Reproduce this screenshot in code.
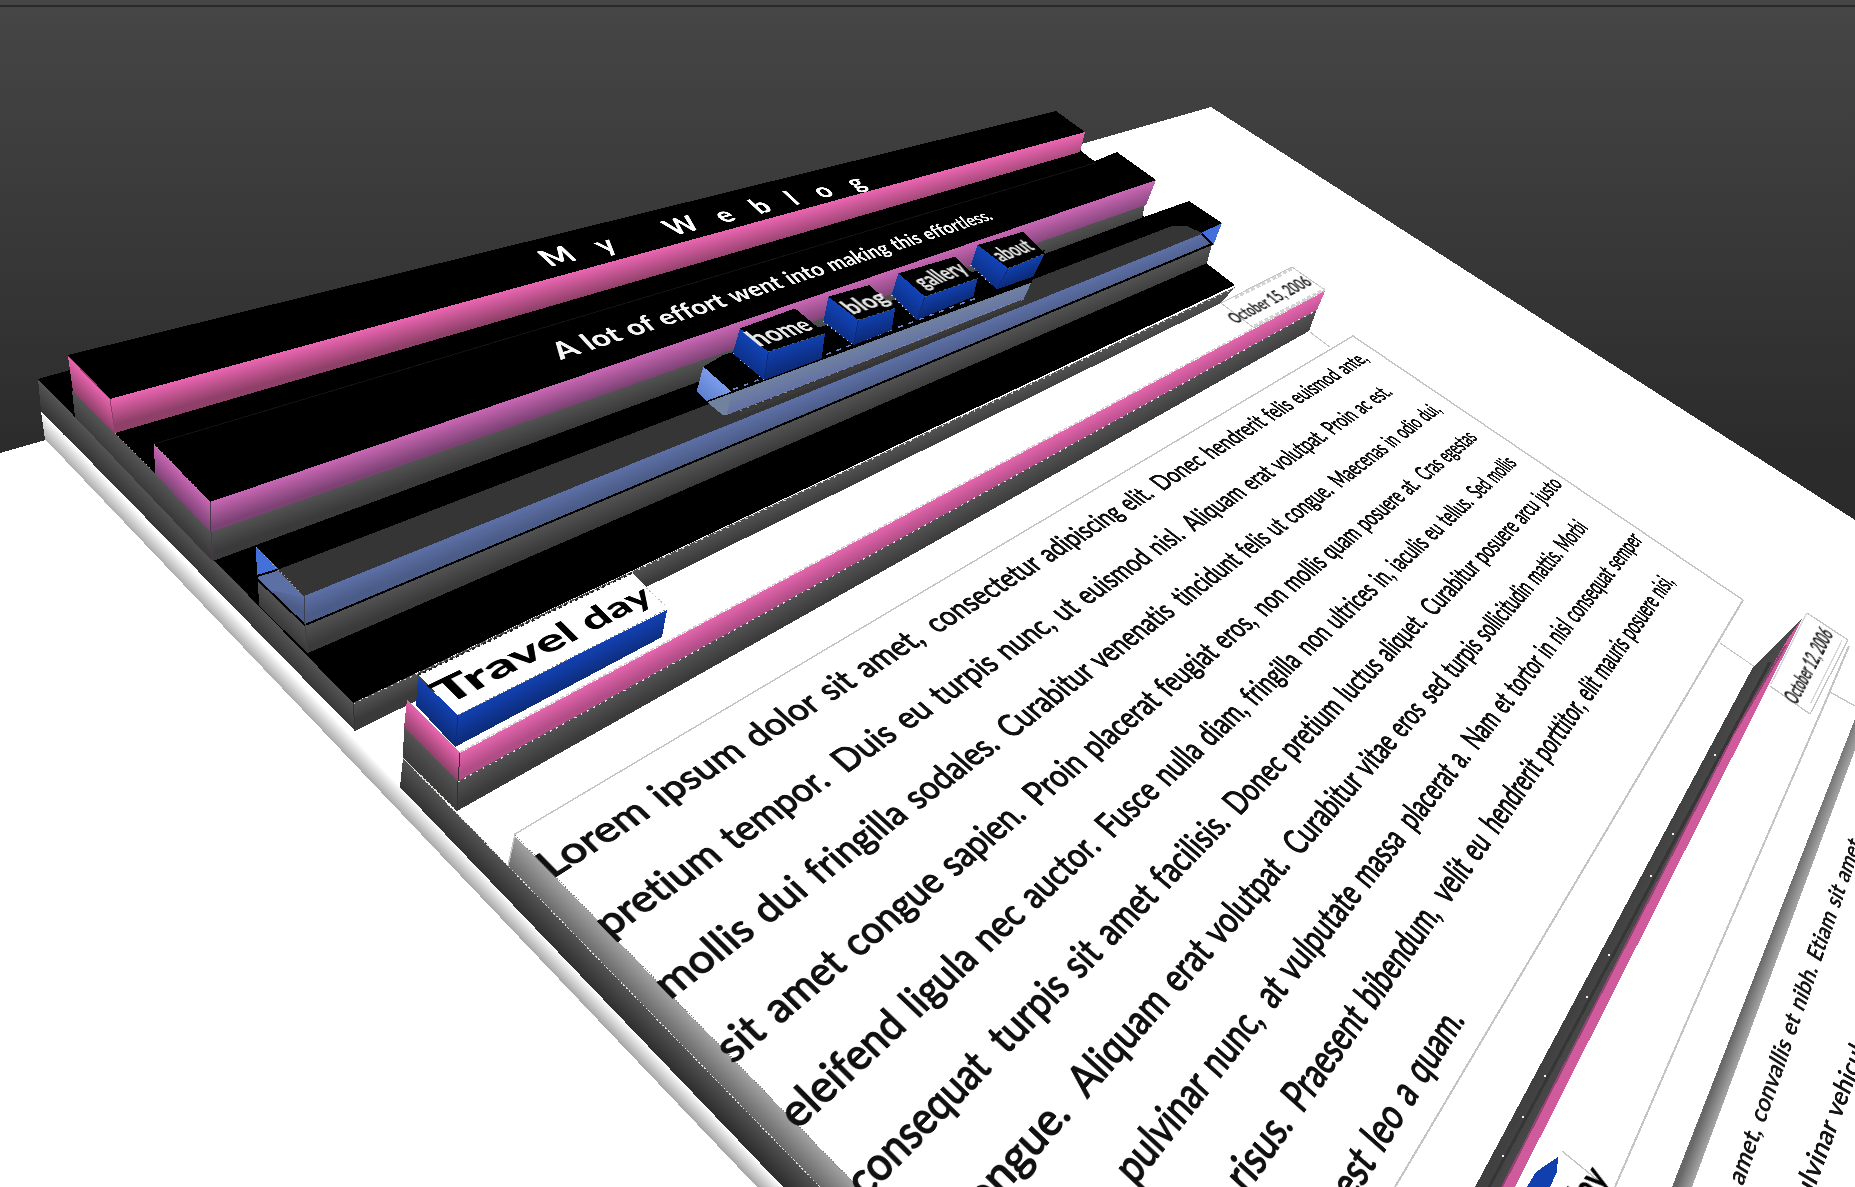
import React from "react";

/* ---------- projective geometry ---------- */

// 3x3 matrix taking the unit square onto a quad (tl, tr, br, bl)
function squareToQuad([p0, p1, p2, p3]) {
  const dx1 = p1[0] - p2[0], dx2 = p3[0] - p2[0];
  const dy1 = p1[1] - p2[1], dy2 = p3[1] - p2[1];
  const sx = p0[0] - p1[0] + p2[0] - p3[0];
  const sy = p0[1] - p1[1] + p2[1] - p3[1];
  const d = dx1 * dy2 - dx2 * dy1;
  const g = (sx * dy2 - dx2 * sy) / d;
  const h = (dx1 * sy - sx * dy1) / d;
  return [
    p1[0] - p0[0] + g * p1[0], p3[0] - p0[0] + h * p3[0], p0[0],
    p1[1] - p0[1] + g * p1[1], p3[1] - p0[1] + h * p3[1], p0[1],
    g, h, 1,
  ];
}

function invert([a, b, c, d, e, f, g, h, i]) {
  return [
    e * i - f * h, c * h - b * i, b * f - c * e,
    f * g - d * i, a * i - c * g, c * d - a * f,
    d * h - e * g, b * g - a * h, a * e - b * d,
  ];
}

function apply(m, [x, y]) {
  const w = m[6] * x + m[7] * y + m[8];
  return [(m[0] * x + m[1] * y + m[2]) / w, (m[3] * x + m[4] * y + m[5]) / w];
}

function toCss(m, w, h) {
  const v = [
    m[0] / w, m[3] / w, 0, m[6] / w,
    m[1] / h, m[4] / h, 0, m[7] / h,
    0, 0, 1, 0,
    m[2], m[5], 0, 1,
  ];
  return `matrix3d(${v.map((n) => n.toFixed(10)).join(",")})`;
}

/* ---------- text laid on a tilted plane ---------- */

function TiltedText({ a, b, ua, ub = ua, w, h, size, children, spread = false, className }) {
  const quad = [
    [a[0] + ua[0], a[1] + ua[1]],
    [b[0] + ub[0], b[1] + ub[1]],
    b,
    a,
  ];
  return (
    <svg
      width={w}
      height={h}
      className={`absolute left-0 top-0 origin-top-left overflow-visible [font-variant-ligatures:none] ${className}`}
      style={{ transform: toCss(squareToQuad(quad), w, h) }}
    >
      <text
        x="0"
        y={h}
        fontSize={size || h / 0.72}
        textLength={w}
        lengthAdjust={spread ? "spacing" : "spacingAndGlyphs"}
        fill="currentColor"
      >
        {children}
      </text>
    </svg>
  );
}

/* ---------- first article body ---------- */

const BODY = squareToQuad([[515, 834], [1353, 336], [1743, 600], [1192, 1527]]);
const BODY_INV = invert(BODY);
const BW = 2400;
const BH = 1400;

const V1 = apply(BODY_INV, [552, 879])[1];
const V10 = apply(BODY_INV, [1464, 1023])[1];
const STEP = (V10 - V1) / 9;

// each entry: text and the point where its baseline starts; the last point closes the line
const LINES = [
  [["Lorem ipsum dolor sit amet,", null], ["consectetur adipiscing elit.", [931, 628]], ["Donec hendrerit felis euismod ante,", [1157, 487]], [1365, 357]],
  [["pretium tempor.", null], ["Duis eu turpis nunc, ut euismod nisl.", [841, 769]], ["Aliquam erat volutpat. Proin ac est.", [1188, 527]], [1390, 391]],
  [["mollis dui fringilla sodales.", null], ["Curabitur venenatis", [1004, 733]], ["tincidunt felis ut congue.", [1178, 602]], ["Maecenas in odio dui,", [1332, 482]], [1441, 410]],
  [["sit amet congue sapien.", null], ["Proin placerat feugiat eros,", [1033, 802]], ["non mollis quam posuere at.", [1257, 611]], ["Cras egestas", [1419, 476]], [1476, 437]],
  [["eleifend ligula nec auctor.", null], ["Fusce nulla diam, fringilla", [1105, 833]], ["non ultrices in, iaculis eu tellus.", [1302, 651]], ["Sed mollis", [1474, 496]], [1516, 463]],
  [["consequat", null], ["turpis sit amet facilisis.", [1001, 1050]], ["Donec pretium luctus aliquet.", [1233, 811]], ["Curabitur posuere arcu justo", [1430, 614]], [1562, 484]],
  [["congue.", [955, 1222]], ["Aliquam erat volutpat.", [1086, 1098]], ["Curabitur vitae eros", [1296, 854]], ["sed turpis sollicitudin mattis. Morbi", [1431, 703]], [1587, 527]],
  [["pulvinar nunc,", [1132, 1184]], ["at vulputate massa", [1271, 1008]], ["placerat a.", [1414, 832]], ["Nam et tortor in nisl consequat semper", [1473, 748]], [1640, 538]],
  [["risus.", [1241, 1190]], ["Praesent bibendum,", [1304, 1116]], ["velit eu", [1447, 904]], ["hendrerit porttitor, elit mauris posuere nisi,", [1498, 836]], [1676, 583]],
  [["est leo a quam.", [1345, 1197]], [1468, 1023]],
];

function layoutLines() {
  const out = [];
  LINES.forEach((line, i) => {
    const y = (V1 + STEP * i) * BH;
    const us = line.map((seg, k) => {
      const pt = k === line.length - 1 ? seg : seg[1];
      return pt ? apply(BODY_INV, pt)[0] * BW : -6;
    });
    for (let k = 0; k < line.length - 1; k++) {
      const text = line[k][0];
      const span = us[k + 1] - us[k];
      const last = k === line.length - 2;
      const n = text.length;
      out.push({ text, x: us[k], y, w: last ? span : (span * n) / (n + 1.1) });
    }
  });
  return out;
}

function ArticleBody() {
  return (
    <svg
      width={BW}
      height={BH}
      className="absolute left-0 top-0 origin-top-left overflow-visible text-[#111] [font-variant-ligatures:none] [word-spacing:0.38em]"
      style={{ transform: toCss(BODY, BW, BH) }}
    >
      {layoutLines().map((s, i) => (
        <text
          key={i}
          x={s.x}
          y={s.y}
          fontSize={STEP * BH * 0.505}
          textLength={s.w}
          lengthAdjust="spacingAndGlyphs"
          fill="currentColor"
          stroke="currentColor"
          strokeWidth="2.2"
        >
          {s.text}
        </text>
      ))}
    </svg>
  );
}

/* ---------- solid faces ---------- */

const str = (pts) => pts.map((p) => p.join(",")).join(" ");

let faceId = 0;
// p[0]-p[1] is the upper edge, p[3]-p[2] the lower one; the shade runs between them
function face(p, from, to) {
  return { id: `f${faceId++}`, p, from, to };
}

function Face({ f }) {
  const [a, b, c, d] = f.p;
  const ex = b[0] - a[0], ey = b[1] - a[1];
  const len = Math.hypot(ex, ey);
  const nx = -ey / len, ny = ex / len;
  const mx = (a[0] + b[0]) / 2, my = (a[1] + b[1]) / 2;
  const qx = (c[0] + d[0]) / 2, qy = (c[1] + d[1]) / 2;
  const t = (qx - mx) * nx + (qy - my) * ny;
  return (
    <>
      <linearGradient id={f.id} gradientUnits="userSpaceOnUse" x1={mx} y1={my} x2={mx + nx * t} y2={my + ny * t}>
        <stop offset="0" stopColor={f.from} />
        <stop offset="1" stopColor={f.to} />
      </linearGradient>
      <polygon points={str(f.p)} fill={`url(#${f.id})`} />
    </>
  );
}

const DK = ["#535353", "#3a3a3a"];
const PINK = ["#ec66b2", "#8f4069"];
const ORCHID = ["#ca67b5", "#7c4274"];
const SLATE = ["#5d70a6", "#4c5c88"];
const BLUE = ["#1341b2", "#0d2d7c"];

const wrapperFaces = [
  face([[41, 411], [783, 1187], [757, 1187], [45, 439]], "#ffffff", "#a9a9a9"),
  face([[403, 758], [822, 1187], [783, 1187], [400, 787]], "#545454", "#2f2f2f"),
  face([[515, 836], [858, 1187], [820, 1187], [508, 866]], "#a2a2a2", "#6a6a6a"),
];

const headerFaces = [
  face([[38, 379], [353, 703], [355, 731], [41, 411]], "#555555", "#363636"),
  face([[353, 703], [1235, 287], [1221, 303], [355, 731]], ...DK),
];

const bar1Faces = [
  face([[72, 391], [213, 532], [213, 562], [75, 417]], "#555555", "#3a3a3a"),
  face([[68, 356], [110, 399], [115, 433], [73, 392]], ...PINK),
  face([[110, 399], [1085, 132], [1080, 152], [115, 433]], ...PINK),
];

const bar2Faces = [
  face([[211, 532], [1145, 204], [1142, 218], [213, 561]], ...DK),
  face([[154, 444], [210, 502], [211, 533], [155, 474]], ...ORCHID),
  face([[210, 502], [1156, 180], [1146, 205], [211, 532]], ...ORCHID),
];

const bar3Faces = [
  face([[258, 581], [305, 626], [308, 653], [259, 606]], ...DK),
  face([[305, 625], [1212, 244], [1207, 263], [308, 653]], ...DK),
  face([[257, 575], [304, 596], [305, 624], [258, 579]], ...SLATE),
  face([[304, 596], [1204, 233], [1212, 243], [305, 624]], ...SLATE),
];

const postFaces = [
  face([[404, 727], [458, 781], [457, 811], [403, 758]], ...DK),
  face([[458, 781], [1317, 309], [1309, 331], [457, 811]], ...DK),
  face([[407, 699], [460, 753], [458, 781], [404, 728]], ...PINK),
  face([[460, 753], [1325, 291], [1317, 310], [458, 781]], "#e466ad", "#b04c86"),
];

const titleFaces = [
  face([[418, 677], [458, 715], [455, 747], [416, 705]], ...BLUE),
  face([[458, 715], [667, 610], [662, 637], [455, 747]], ...BLUE),
];

const z5 = (pts) => pts.map(([x, y]) => [680 + x / 3, 200 + y / 3]);

const BUTTONS = [
  [[180, 385], [345, 325], [435, 400], [265, 455], [158, 460], [252, 540], [425, 475]],
  [[445, 290], [568, 255], [645, 325], [535, 360], [430, 365], [520, 435], [635, 390]],
  [[655, 220], [825, 170], [893, 235], [735, 290], [635, 285], [710, 360], [880, 290]],
  [[893, 135], [1030, 95], [1095, 160], [985, 205], [872, 195], [950, 268], [1060, 230]],
].map((b) => {
  const [tl, tr, r, f, ll, bt, lr] = z5(b);
  return {
    top: [tl, tr, r, f],
    left: face([tl, f, bt, ll], "#1244b8", "#0d3088"),
    front: face([f, r, lr, bt], "#1140ae", "#0c2a78"),
  };
});

const menuSide = face(z5([[70, 500], [155, 575], [80, 605], [50, 575]]), "#7b9bec", "#5f80cc");
const menuFront = face(z5([[155, 578], [1055, 245], [1030, 300], [140, 645]]), "#71829f", "#6473a4");

const farFaces = [
  face([[1803, 617], [1515, 1187], [1475, 1187], [1753, 667]], "#4d4d4d", "#404040"),
  face([[1855, 750], [1692, 1187], [1672, 1187], [1855, 719]], "#a6a6a6", "#686868"),
];

const DOTS = [[825, 452], [698, 657], [632, 764], [507, 968], [440, 1076], [315, 1282], [248, 1388], [188, 1487]];

function Scene() {
  return (
    <svg width="1855" height="1187" viewBox="0 0 1855 1187" shapeRendering="crispEdges" className="absolute left-0 top-0 block">
      <polygon points="0,453 1211,107 1855,520 1855,1187 0,1187" fill="#fff" />

      {wrapperFaces.map((f) => <Face key={f.id} f={f} />)}
      <path d="M403 758 L820 1187" stroke="#e8e2da" strokeDasharray="2 2" fill="none" />
      <path d="M515 835 L858 1187" stroke="#7a7a7a" strokeDasharray="1 2" fill="none" />

      <polygon points="38,379 70,370 1080,150 1095,162 1144,217 1206,263 1235,285 353,703" fill="#000" />
      {headerFaces.map((f) => <Face key={f.id} f={f} />)}

      {bar1Faces.map((f) => <Face key={f.id} f={f} />)}
      <polygon points="115,433 1080,152 1095,161 154,472" fill="#000" />
      <polygon points="68,355 1056,111 1085,132 110,399" fill="#000" />
      <path d="M115 433 L154 472" stroke="#aaa" strokeDasharray="1 3" fill="none" />
      <path d="M68 356 L110 399 L115 432" stroke="#8f4069" strokeWidth="1" fill="none" />

      <polygon points="154,444 1095,161 1117,152 1156,180 210,502" fill="#000" />
      <path d="M154 444 L1095 163" stroke="#121212" strokeWidth="1" fill="none" />
      {bar2Faces.map((f) => <Face key={f.id} f={f} />)}
      <path d="M154 444 L210 502" stroke="#999" strokeDasharray="1 3" fill="none" />
      <path d="M210 502 L211 532 L213 561" stroke="#4a3a48" fill="none" />

      <polygon points="256,547 1144,217 1189,201 1222,223 1204,236 304,596" fill="#000" />
      <polygon points="277,570 1172,226 1187,226 1204,234 304,596" fill="#353535" />
      <polygon points="256,547 278,569 257,576" fill="#4370da" />
      {bar3Faces.map((f) => <Face key={f.id} f={f} />)}
      <polygon points="257,576 277,569 304,597 270,590" fill="#5d70a6" />
      <path d="M257 576 L277 570" stroke="#000" strokeWidth="2" fill="none" />
      <path d="M258 580 L305 625 L1212 244" stroke="#000" strokeWidth="2" fill="none" />
      <path d="M256 547 L304 596" stroke="#aaa" strokeDasharray="1 3" fill="none" />
      <path d="M304 596 L305 624 L308 653" stroke="#3c3f4c" fill="none" />
      <polygon points="1222,223 1213,246 1201,233" fill="#4370da" />
      <path d="M1202 234 L1213 245" stroke="#000" strokeWidth="2" fill="none" />

      <polygon points={str(z5([[70, 500], [130, 465], [430, 378], [640, 300], [880, 215], [1095, 150], [1055, 245], [155, 578]]))} fill="#000" />
      <Face f={menuSide} />
      <Face f={menuFront} />
      <polygon points={str(z5([[80, 605], [155, 578], [140, 645], [128, 645]]))} fill="#71829f" />
      <path d={`M${z5([[80, 605]])[0]} L${z5([[1055, 245]])[0]}`} stroke="#000" strokeWidth="1.5" fill="none" />
      <path d={`M${z5([[160, 568]])[0]} L${z5([[900, 290]])[0]}`} stroke="#6a84c0" strokeWidth="1.5" strokeDasharray="5 6" fill="none" />
      <path d={`M${z5([[180, 640]])[0]} L${z5([[1025, 305]])[0]}`} stroke="#3a3a3a" strokeWidth="3.5" fill="none" />
      <path d={`M${z5([[180, 632]])[0]} L${z5([[1025, 297]])[0]}`} stroke="#8c8c88" strokeWidth="1" strokeDasharray="2 6" fill="none" />
      {BUTTONS.map((b) => (
        <g key={b.left.id}>
          <polygon points={str(b.top)} fill="#000" />
          <Face f={b.left} />
          <Face f={b.front} />
          <path d={`M${b.top[3]} L${b.left.p[2]}`} stroke="#0c2b7a" fill="none" />
          <path d={`M${b.top[3]} L${b.top[2]}`} stroke="#5c5c5c" strokeDasharray="2 3" fill="none" />
          <path d={`M${b.left.p[3]} L${b.left.p[2]}`} stroke="#a9c0f0" strokeDasharray="1 4" fill="none" />
        </g>
      ))}

      <polygon points="408,698 1292,267 1325,291 460,753" fill="#fff" />
      <Face f={headerFaces[1]} />
      <path d="M353 704 L1235 288" stroke="#d8d8d8" strokeWidth="1.2" strokeDasharray="2 5" fill="none" />
      <path d="M353 703 L355 731" stroke="#333" fill="none" />
      {postFaces.map((f) => <Face key={f.id} f={f} />)}
      <path d="M460 752 L1325 290" stroke="#d9c9d2" strokeWidth="1.5" strokeDasharray="4 2" fill="none" />
      <path d="M458 782 L1317 310" stroke="#e2e2e2" strokeWidth="1.2" strokeDasharray="2 5" fill="none" />
      <path d="M403 758 L457 811" stroke="#e0dcd6" strokeDasharray="2 3" fill="none" />
      <path d="M460 753 L458 781 L457 811" stroke="#3a2a34" strokeWidth="1" fill="none" />

      <polygon points="418,675 632,573 667,607 458,715" fill="#fff" />
      {titleFaces.map((f) => <Face key={f.id} f={f} />)}
      <path d="M458 715 L455 747" stroke="#0d2d7c" fill="none" />
      <path d="M418 675 L632 573" stroke="#222" strokeWidth="2" strokeDasharray="3 3" fill="none" />
      <path d="M643 585 L667 607" stroke="#bbb" strokeDasharray="2 2" fill="none" />
      <path d="M458 715 L667 609" stroke="#8a8a8a" strokeDasharray="2 3" fill="none" />

      <g fill="none" stroke="#c4c4c4">
        <polygon points="1221,303 1292,267 1325,290 1254,328" fill="#fff" />
        <path d="M1235 298 L1292 269 M1254 326 L1325 289" strokeWidth="3" strokeDasharray="4 2" stroke="#d4d4d4" />
        <path d="M1310 332 L1330 347" />
        <path d="M508 866 L515 834 L1353 336 L1743 600" strokeWidth="1.4" />
        <path d="M1743 600 L1395 1187" strokeWidth="2" />
        <path d="M1720 643 L1755 667" />
      </g>

      {farFaces.map((f) => <Face key={f.id} f={f} />)}
      <polygon points="1803,617 1515,1187 1502,1187 1733,735 1787,640" fill="#cf5a9c" />
      <path d="M1786 645 L1733 735 L1502 1187" stroke="#8f4472" strokeWidth="2" fill="none" />
      <path d="M1770 662 L1489 1187" stroke="#363636" strokeWidth="3" fill="none" />
      {DOTS.map(([x, y]) => (
        <rect key={y} x={1439 + x / 3} y={579 + y / 2.583} width="2" height="2" fill="#f4f4f4" />
      ))}
      <g fill="none" stroke="#c4c4c4" strokeWidth="1.3">
        <path d="M1807 613 L1848 640 L1810 714 L1770 686" />
        <path d="M1807 613 L1771 684 M1842 640 L1811 703" stroke="#d6d6d6" />
        <path d="M1849 646 L1824 705 L1615 1187" strokeWidth="2" />
        <path d="M1830 692 L1855 706" />
        <path d="M1562 1151 L1606 1187" />
      </g>
      <polygon points="1558,1157 1557,1172 1550,1187 1527,1187 1536,1172 1546,1165" fill="#123fae" />
    </svg>
  );
}

export default function App() {
  return (
    <main className="relative h-[1187px] w-[1855px] overflow-hidden bg-[linear-gradient(to_bottom,#464646_0px,#2b2b2b_460px)] font-[Lato,sans-serif]">
      <div className="mt-[5px] h-[2px] w-full bg-[#2a2a2a]" />
      <Scene />
      <ArticleBody />

      <TiltedText a={[550, 267]} b={[868, 187]} ua={[-15, -14]} ub={[-13, -12]} w={1000} h={58} size={84} spread className="font-black text-white">
        My Weblog
      </TiltedText>
      <TiltedText a={[561, 360]} b={[994, 219]} ua={[-14, -15]} ub={[-9, -10]} w={1400} h={50} className="font-black text-[#f4f4f4] [word-spacing:0.25em]">
        A lot of effort went into making this effortless.
      </TiltedText>

      <TiltedText a={[759, 347]} b={[815, 329]} ua={[-17, -14]} ub={[-15, -12]} w={120} h={36} className="font-black text-[#e6e6e6]">home</TiltedText>
      <TiltedText a={[853, 315]} b={[892, 302]} ua={[-15, -12]} w={100} h={36} className="font-black text-[#e6e6e6]">blog</TiltedText>
      <TiltedText a={[925, 289]} b={[970, 272]} ua={[-15, -11]} w={120} h={36} className="font-black text-[#e6e6e6]">gallery</TiltedText>
      <TiltedText a={[1002, 262]} b={[1036, 249]} ua={[-14, -11]} w={110} h={36} className="font-black text-[#e6e6e6]">about</TiltedText>

      <TiltedText a={[446, 706]} b={[655, 600]} ua={[-20, -20]} ub={[-16, -16]} w={400} h={50} className="font-black text-black">
        Travel day
      </TiltedText>

      <TiltedText a={[1236, 324]} b={[1313, 284]} ua={[-11, -9]} w={260} h={36} className="font-bold text-[#222]">October 15, 2006</TiltedText>
      <TiltedText a={[1797, 706]} b={[1834, 635]} ua={[-13, -9]} w={260} h={36} className="font-bold text-[#222]">October 12, 2006</TiltedText>

      <TiltedText a={[1743, 1187]} b={[1862, 844]} ua={[-16, -10]} ub={[-14, -9]} w={640} h={40} className="font-bold text-[#151515] [word-spacing:0.3em]">
        amet, convallis et nibh. Etiam sit amet
      </TiltedText>
      <TiltedText a={[1805, 1216]} b={[1870, 1040]} ua={[-18, -11]} ub={[-16, -9]} w={400} h={48} className="font-bold text-[#151515] [word-spacing:0.3em]">
        pulvinar vehicula
      </TiltedText>
      <TiltedText a={[1584, 1216]} b={[1610, 1180]} ua={[-24, -18]} w={80} h={50} className="font-black text-black">day</TiltedText>
    </main>
  );
}
